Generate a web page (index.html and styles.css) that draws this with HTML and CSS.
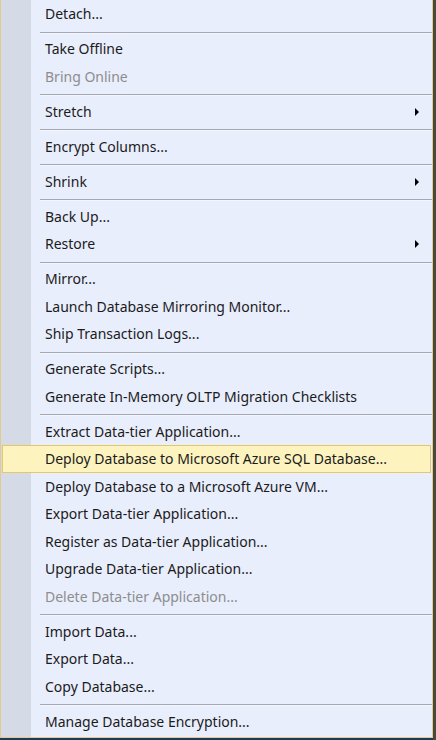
FILE: index.html
```html
<!DOCTYPE html>
<html>
<head>
<meta charset="utf-8">
<link rel="stylesheet" href="styles.css">
</head>
<body>
<div class="menu">
  <div class="item">Detach...</div>
  <div class="sep"></div>
  <div class="item">Take Offline</div>
  <div class="item disabled">Bring Online</div>
  <div class="sep"></div>
  <div class="item sub">Stretch</div>
  <div class="sep"></div>
  <div class="item">Encrypt Columns...</div>
  <div class="sep"></div>
  <div class="item sub">Shrink</div>
  <div class="sep"></div>
  <div class="item">Back Up...</div>
  <div class="item sub">Restore</div>
  <div class="sep"></div>
  <div class="item">Mirror...</div>
  <div class="item">Launch Database Mirroring Monitor...</div>
  <div class="item">Ship Transaction Logs...</div>
  <div class="sep"></div>
  <div class="item">Generate Scripts...</div>
  <div class="item">Generate In-Memory OLTP Migration Checklists</div>
  <div class="sep"></div>
  <div class="item">Extract Data-tier Application...</div>
  <div class="item hover">Deploy Database to Microsoft Azure SQL Database...</div>
  <div class="item">Deploy Database to a Microsoft Azure VM...</div>
  <div class="item">Export Data-tier Application...</div>
  <div class="item">Register as Data-tier Application...</div>
  <div class="item">Upgrade Data-tier Application...</div>
  <div class="item disabled">Delete Data-tier Application...</div>
  <div class="sep"></div>
  <div class="item">Import Data...</div>
  <div class="item">Export Data...</div>
  <div class="item">Copy Database...</div>
  <div class="sep"></div>
  <div class="item">Manage Database Encryption...</div>
</div>
</body>
</html>
```
FILE: styles.css
```css
html, body {
  margin: 0;
  padding: 0;
}
body {
  width: 436px;
  height: 740px;
  overflow: hidden;
  background: linear-gradient(to right, #6f6a60 0, #4a4740 100%);
  font-family: "Noto Sans", "Open Sans", sans-serif;
}
.menu {
  width: 431px;
  border-left: 1px solid #e2c98d;
  border-right: 1px solid #e2c98d;
  border-bottom: 1px solid #e2c98d;
  padding-bottom: 2px;
  background: linear-gradient(to right, #d5dae7 0, #d5dae7 30px, #e9eefd 30px);
  box-shadow: 0 2px 0 #1c3a5a;
}
.item {
  position: relative;
  box-sizing: border-box;
  height: 27.5px;
  line-height: 27.5px;
  padding-left: 44px;
  font-size: 14px;
  color: #1b1b1b;
  white-space: nowrap;
}
.item.disabled {
  color: #8d8d8d;
}
.item.sub::after {
  content: "";
  position: absolute;
  right: 13px;
  top: 10px;
  border-left: 4px solid #000;
  border-top: 4px solid transparent;
  border-bottom: 4px solid transparent;
}
.item.hover {
  background-color: #fdf3be;
  border: 1px solid #e6c666;
  margin: 0 1px;
  padding-left: 42px;
  line-height: 25.5px;
}
.sep {
  height: 7.5px;
  box-sizing: border-box;
  padding-top: 4px;
  margin-left: 39px;
}
.sep::before {
  content: "";
  display: block;
  height: 1px;
  background: #a3a8b3;
  border-bottom: 1px solid #f4f6ff;
}
```
